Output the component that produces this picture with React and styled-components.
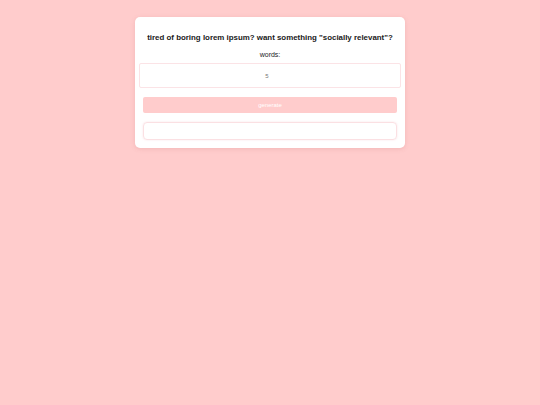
import React from "react";
import styled, { createGlobalStyle } from "styled-components";

const GlobalStyle = createGlobalStyle`
  html, body {
    margin: 0;
    padding: 0;
    background-color: #ffcccc;
    font-family: "Liberation Sans", Arial, sans-serif;
  }
`;

function App() {
  return (
    <Page>
      <GlobalStyle />
      <Card>
        <Title>tired of boring lorem ipsum? want something "socially relevant"?</Title>
        <Label>words:</Label>
        <WordsInput type="number" defaultValue={5} />
        <GenerateButton>generate</GenerateButton>
        <Output />
      </Card>
    </Page>
  );
}

export default App;

const Page = styled.div`
  width: 540px;
  height: 405px;
  display: flex;
  justify-content: center;
  align-items: flex-start;
  padding-top: 17px;
  box-sizing: border-box;
`;

const Card = styled.div`
  width: 270px;
  box-sizing: border-box;
  background-color: #ffffff;
  border-radius: 5px;
  box-shadow: 0 1px 4px rgba(200, 120, 120, 0.25);
  padding: 14px 4px 8px;
  display: flex;
  flex-direction: column;
  align-items: stretch;
`;

const Title = styled.h1`
  margin: 0;
  font-size: 7.9px;
  font-weight: 700;
  color: #1a1a1a;
  text-align: center;
  line-height: 14px;
`;

const Label = styled.div`
  margin-top: 5px;
  font-size: 7px;
  color: #222;
  text-align: center;
  line-height: 10px;
`;

const WordsInput = styled.input`
  margin-top: 3px;
  height: 25px;
  box-sizing: border-box;
  border: 1px solid #fbe3e6;
  border-radius: 2px;
  padding: 0 6px 0 0;
  text-align: center;
  font-family: "Liberation Sans", Arial, sans-serif;
  font-size: 6px;
  color: #777;
  outline: none;
  appearance: textfield;
  -moz-appearance: textfield;
  &::-webkit-inner-spin-button,
  &::-webkit-outer-spin-button {
    -webkit-appearance: none;
    margin: 0;
  }
`;

const GenerateButton = styled.button`
  margin: 9px 4px 0;
  height: 16px;
  border: none;
  border-radius: 2px;
  background-color: #ffcccc;
  color: #fff;
  font-family: "Liberation Sans", Arial, sans-serif;
  font-size: 6px;
  padding: 0;
`;

const Output = styled.div`
  margin: 9px 4px 0;
  height: 18px;
  box-sizing: border-box;
  border: 1px solid #fbe0e3;
  border-radius: 4px;
  box-shadow: 0 0 2px rgba(240, 180, 190, 0.4);
`;
